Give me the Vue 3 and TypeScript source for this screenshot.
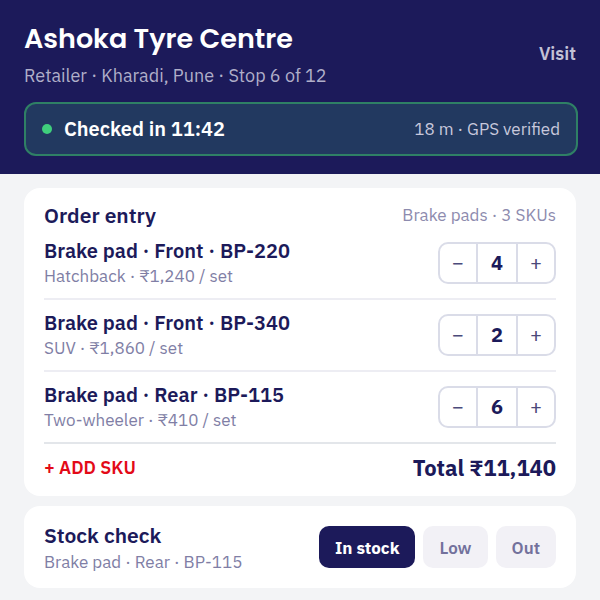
<script setup lang="ts">
import { computed, ref } from 'vue'

interface OrderLine {
  name: string
  segment: string
  price: number
  quantity: number
}

const lines = ref<OrderLine[]>([
  { name: 'Brake pad · Front · BP-220', segment: 'Hatchback', price: 1240, quantity: 4 },
  { name: 'Brake pad · Front · BP-340', segment: 'SUV', price: 1860, quantity: 2 },
  { name: 'Brake pad · Rear · BP-115', segment: 'Two-wheeler', price: 410, quantity: 6 },
])

const stockLevels = ['In stock', 'Low', 'Out'] as const
const stock = ref<(typeof stockLevels)[number]>('In stock')

const total = computed(() => lines.value.reduce((sum, l) => sum + l.price * l.quantity, 0))

function rupees(value: number): string {
  return '₹' + value.toLocaleString('en-IN')
}

function change(line: OrderLine, step: number): void {
  line.quantity = Math.max(0, line.quantity + step)
}

function addSku(): void {
  lines.value.push({ name: 'Brake pad · Rear · BP-120', segment: 'Hatchback', price: 980, quantity: 1 })
}
</script>

<template>
  <div class="screen">
    <header class="header">
      <div class="heading">
        <div>
          <h1>Ashoka Tyre Centre</h1>
          <p class="place">Retailer · Kharadi, Pune · Stop 6 of 12</p>
        </div>
        <span class="visit">Visit</span>
      </div>
      <div class="checkin">
        <span class="dot"></span>
        <strong>Checked in 11:42</strong>
        <span class="gps">18 m · GPS verified</span>
      </div>
    </header>

    <main class="content">
      <section class="card order">
        <div class="card-head">
          <h2>Order entry</h2>
          <span class="summary">Brake pads · {{ lines.length }} SKUs</span>
        </div>
        <ul class="lines">
          <li v-for="line in lines" :key="line.name" class="line">
            <div>
              <h3>{{ line.name }}</h3>
              <p class="detail">{{ line.segment }} · {{ rupees(line.price) }} / set</p>
            </div>
            <div class="stepper" role="group" :aria-label="line.name">
              <button type="button" aria-label="Decrease quantity" @click="change(line, -1)">−</button>
              <output>{{ line.quantity }}</output>
              <button type="button" aria-label="Increase quantity" @click="change(line, 1)">+</button>
            </div>
          </li>
        </ul>
        <div class="order-foot">
          <button type="button" class="add" @click="addSku">+ ADD SKU</button>
          <strong class="total">Total {{ rupees(total) }}</strong>
        </div>
      </section>

      <section class="card stock">
        <div>
          <h2>Stock check</h2>
          <p class="detail">Brake pad · Rear · BP-115</p>
        </div>
        <div class="levels" role="group" aria-label="Stock level">
          <button
            v-for="level in stockLevels"
            :key="level"
            type="button"
            :class="{ active: stock === level }"
            :aria-pressed="stock === level"
            @click="stock = level"
          >{{ level }}</button>
        </div>
      </section>
    </main>
  </div>
</template>

<style>
body {
  margin: 0;
  background: #f3f4f6;
}
</style>

<style scoped>
.screen {
  min-height: 100vh;
  box-sizing: border-box;
  background: #f3f4f6;
  color: #1c1a5a;
  font-family: "IBM Plex Sans", "Noto Sans", sans-serif;
  font-size: 16px;
}

h1, h2, h3, p, ul {
  margin: 0;
  padding: 0;
}

button {
  font: inherit;
  cursor: pointer;
}

.header {
  padding: 20px 24px 18px;
  background: #1c1a5a;
}

.heading {
  display: flex;
  align-items: center;
  justify-content: space-between;
}

h1 {
  color: #ffffff;
  font-family: Poppins, Inter, sans-serif;
  font-size: 27px;
  font-weight: 600;
  line-height: 38px;
}

.place {
  margin-top: 6px;
  color: #b0afc9;
  font-size: 18px;
  line-height: 24px;
}

.visit {
  color: #c3c2d6;
  font-size: 18px;
  font-weight: 600;
  line-height: 24px;
}

.checkin {
  display: flex;
  align-items: center;
  box-sizing: border-box;
  height: 54px;
  margin: 14px -2px 0 0;
  padding: 0 16px;
  border: 2px solid #2f8065;
  border-radius: 12px;
  background: #223960;
  color: #ffffff;
  font-size: 20px;
}

.checkin strong {
  font-weight: 600;
  line-height: 24px;
}

.dot {
  width: 10px;
  height: 10px;
  margin-right: 12px;
  border-radius: 50%;
  background: #3fcf7c;
}

.gps {
  margin-left: auto;
  color: #c8c8dc;
  font-size: 17px;
  line-height: 24px;
}

.content {
  display: grid;
  gap: 10px;
  padding: 14px 24px 12px;
}

.card {
  padding: 0 20px;
  border-radius: 16px;
  background: #ffffff;
}

.card-head {
  display: flex;
  align-items: center;
  justify-content: space-between;
  height: 26px;
  padding-top: 14px;
}

h2 {
  font-size: 21px;
  font-weight: 600;
  line-height: 30px;
}

.summary {
  color: #8d8bae;
  font-size: 17px;
}

.lines {
  list-style: none;
}

.line {
  display: flex;
  align-items: center;
  justify-content: space-between;
  box-sizing: border-box;
  height: 72px;
  border-bottom: 2px solid #ededf3;
}

.line:last-child {
  border-bottom-color: #e3e6ea;
}

h3 {
  font-size: 20px;
  font-weight: 600;
  line-height: 26px;
}

.detail {
  color: #807ea5;
  font-size: 17px;
  line-height: 24px;
}

.stepper {
  display: flex;
  box-sizing: border-box;
  height: 42px;
  border: 2px solid #dadce8;
  border-radius: 10px;
}

.stepper button {
  width: 36px;
  padding: 0;
  border: 0;
  background: none;
  color: #4b4a7b;
  font-size: 20px;
  line-height: 38px;
}

.stepper output {
  width: 38px;
  border: solid #dadce8;
  border-width: 0 2px;
  font-size: 20px;
  font-weight: 700;
  line-height: 38px;
  text-align: center;
}

.order-foot {
  display: flex;
  align-items: center;
  justify-content: space-between;
  height: 46px;
  padding-bottom: 6px;
}

.add {
  padding: 0;
  border: 0;
  background: none;
  color: #e30a17;
  font-size: 18px;
  font-weight: 600;
}

.total {
  font-size: 22px;
  font-weight: 700;
}

.stock {
  display: flex;
  align-items: center;
  justify-content: space-between;
  height: 82px;
}

.levels {
  display: flex;
  gap: 8px;
}

.levels button {
  height: 42px;
  padding: 2px 16px 0;
  border: 0;
  border-radius: 10px;
  background: #f2f1f6;
  color: #73719c;
  font-size: 17px;
  font-weight: 600;
}

.levels .active {
  background: #1c1a5a;
  color: #ffffff;
  font-weight: 700;
}
</style>
